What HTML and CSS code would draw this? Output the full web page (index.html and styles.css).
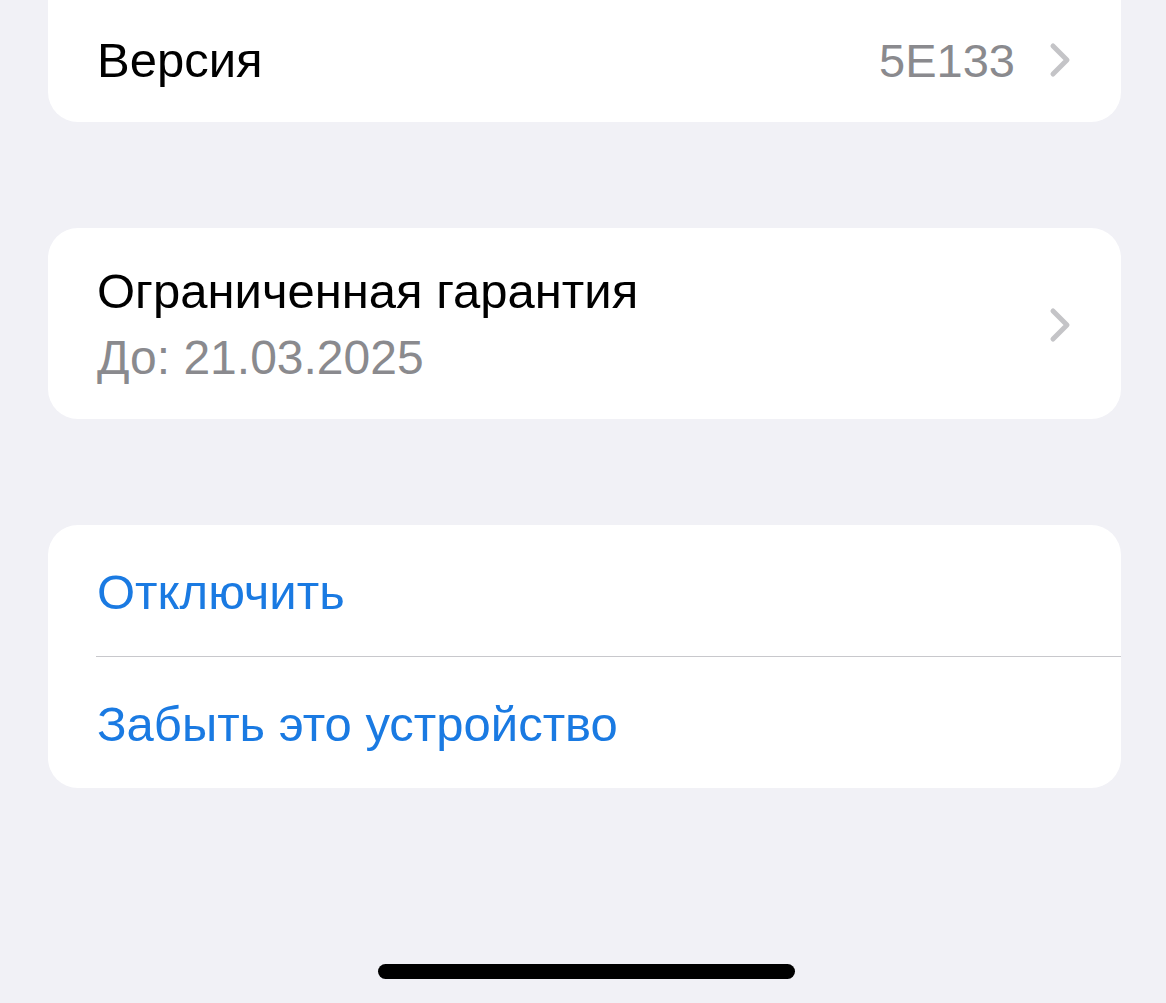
FILE: index.html
```html
<!DOCTYPE html>
<html lang="ru">
<head>
<meta charset="utf-8">
<link rel="stylesheet" href="styles.css">
</head>
<body>
<main class="screen">
  <section class="card card-first">
    <div class="row row-single">
      <span class="label">Версия</span>
      <span class="trail">
        <span class="value">5E133</span>
        <svg class="chev" width="22" height="36" viewBox="0 0 22 36"><path d="M4 4 L18 18 L4 32" fill="none" stroke="#c4c4c7" stroke-width="5" stroke-linecap="round" stroke-linejoin="round"/></svg>
      </span>
    </div>
  </section>

  <section class="card">
    <div class="row row-double">
      <div class="stack">
        <span class="label">Ограниченная гарантия</span>
        <span class="sub">До: 21.03.2025</span>
      </div>
      <span class="trail">
        <svg class="chev" width="22" height="36" viewBox="0 0 22 36"><path d="M4 4 L18 18 L4 32" fill="none" stroke="#c4c4c7" stroke-width="5" stroke-linecap="round" stroke-linejoin="round"/></svg>
      </span>
    </div>
  </section>

  <section class="card">
    <div class="row row-action"><span class="action">Отключить</span></div>
    <div class="sep"></div>
    <div class="row row-action"><span class="action">Забыть это устройство</span></div>
  </section>

  <div class="home-wrap"><div class="home"></div></div>
</main>
</body>
</html>
```

FILE: styles.css
```css
html, body {
  margin: 0;
  padding: 0;
  background: #f1f1f6;
}
body {
  font-family: "Liberation Sans", Arial, sans-serif;
  width: 1166px;
  height: 1003px;
  overflow: hidden;
}
.screen {
  display: flex;
  flex-direction: column;
  padding: 0 45px 0 48px;
  gap: 106px;
}
.card {
  background: #ffffff;
  border-radius: 30px;
  display: flex;
  flex-direction: column;
}
.card-first {
  margin-top: -30px;
}
.row {
  display: flex;
  align-items: center;
  justify-content: space-between;
  padding: 0 50px 0 49px;
  box-sizing: border-box;
}
.row-single {
  height: 152px;
  padding-top: 28px;
}
.row-double {
  height: 191px;
  padding-top: 2px;
}
.row-action {
  height: 131px;
  padding-top: 3px;
  justify-content: flex-start;
}
.label {
  font-size: 49px;
  color: #000000;
  line-height: 1;
}
.stack {
  display: flex;
  flex-direction: column;
  gap: 18px;
}
.sub {
  font-size: 48px;
  color: #8a8a8e;
  line-height: 1;
}
.trail {
  display: flex;
  align-items: center;
  gap: 34px;
}
.value {
  font-size: 47px;
  color: #8a8a8e;
  line-height: 1;
}
.chev {
  display: block;
}
.action {
  font-size: 49px;
  color: #1a7ae2;
  line-height: 1;
}
.sep {
  height: 1px;
  background: #c8c8cc;
  margin-left: 48px;
}
.home-wrap {
  display: flex;
  justify-content: center;
  margin-top: 70px;
}
.home {
  width: 417px;
  height: 15px;
  border-radius: 8px;
  background: #000000;
  margin-left: 3px;
}
```
